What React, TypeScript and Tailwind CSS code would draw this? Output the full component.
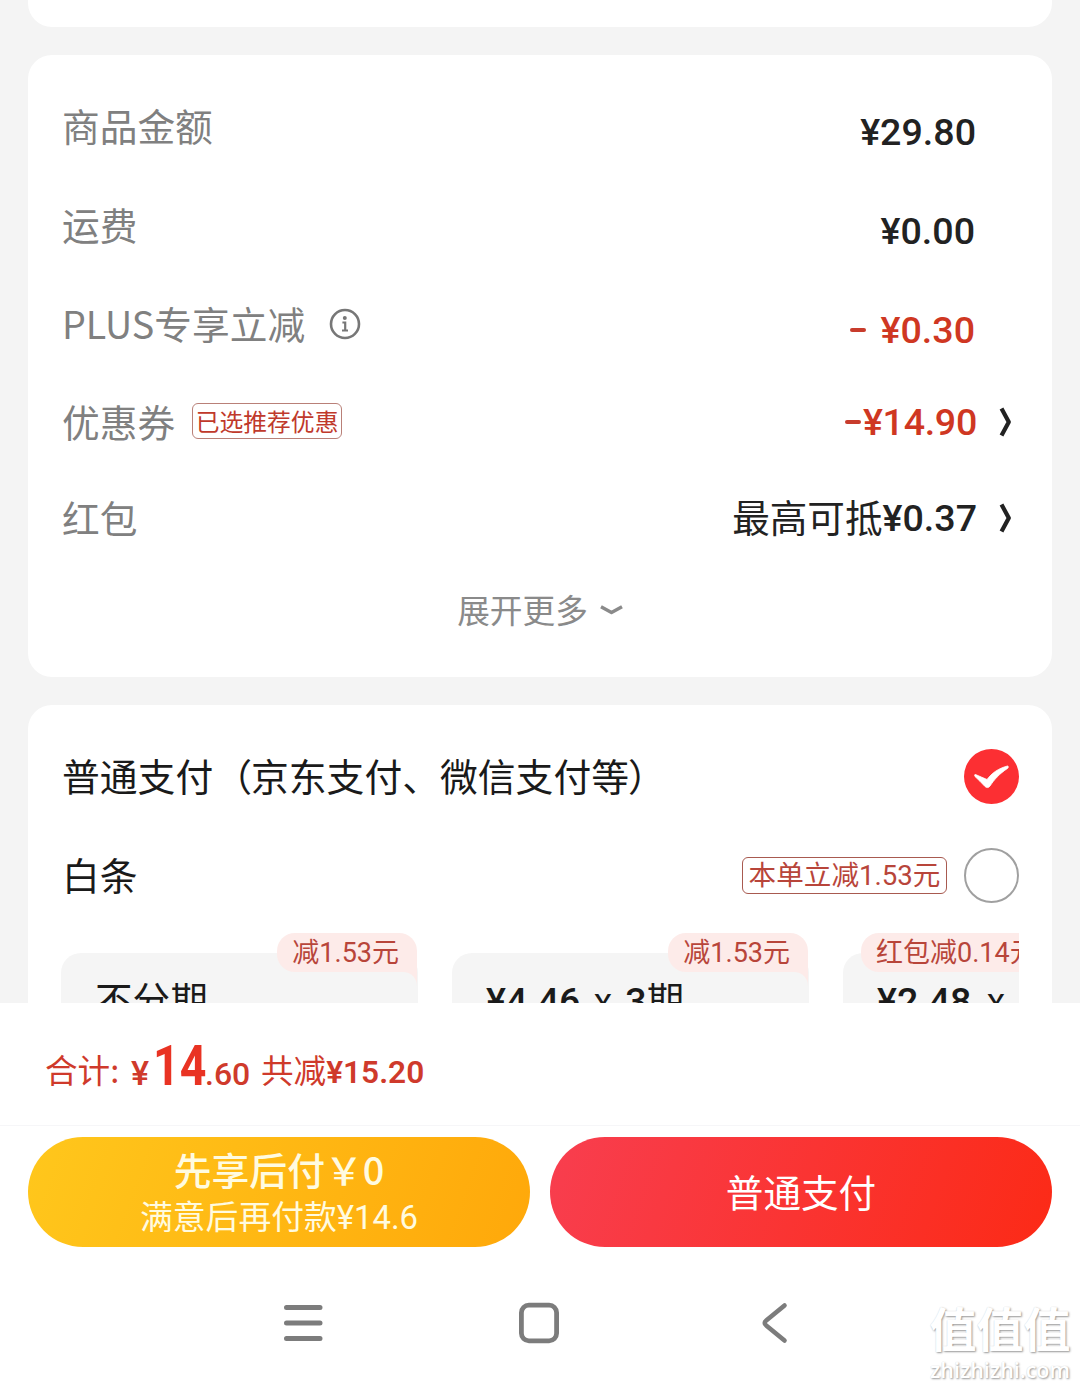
import { ReactNode } from "react";

type TPriceRow = {
  label: string;
  height: string;
  extra?: ReactNode;
  children: ReactNode;
};

type TPlan = {
  tag: string;
  tagClass: string;
  title: ReactNode;
};

const NUM = "font-[Roboto,'Noto_Sans_CJK_SC',sans-serif] font-medium";
const MIXED = "font-[Roboto,'Noto_Sans_CJK_SC',sans-serif]";

function PriceRow({ label, height, extra, children }: TPriceRow) {
  return (
    <div className={`flex items-center justify-between ${height}`}>
      <div className="flex items-center text-[37.7px] text-[#808080]">
        <span className="pb-1">{label}</span>
        {extra}
      </div>
      <div className="flex items-center text-[37.6px] text-[#222]">{children}</div>
    </div>
  );
}

function InfoIcon() {
  return (
    <svg className="mb-px ml-6 h-8 w-8" viewBox="0 0 32 32" fill="none" stroke="#777">
      <circle cx="16" cy="16" r="14" strokeWidth="2.6" />
      <circle cx="15.8" cy="10" r="2" fill="#777" stroke="none" />
      <path d="M13.4 14.5h2.800v7.500M13 22.500h6" strokeWidth="2.2" />
    </svg>
  );
}

function ArrowRight() {
  return (
    <svg className="mr-px mb-px ml-[22px] h-[30px] w-[14px]" viewBox="0 0 14 30" fill="none" stroke="#222" strokeWidth="4.2">
      <path d="M2.500 1.500L9.800 15L2.500 28.500" strokeLinejoin="round" />
    </svg>
  );
}

function PlanCard({ tag, tagClass, title }: TPlan) {
  return (
    <div className="relative h-[140px] w-[357px] shrink-0 rounded-[20px] bg-[#f5f5f5] pt-[18px] pl-[34px]">
      <div className={`absolute -top-5 flex h-[39px] items-center rounded-t-[18px] rounded-bl-[18px] bg-[#fdebe9] pr-[18px] pl-[15px] text-[27px] whitespace-nowrap text-[#b8453a] ${MIXED} ${tagClass}`}>
        <span className="relative top-px">{tag}</span>
        {/* little tail that wraps the card corner */}
        <span className="absolute top-full right-0 h-[14px] w-[14px] bg-[#fdebe9]">
          <span className="block h-full w-full rounded-tr-[14px] bg-[#f5f5f5]"></span>
        </span>
      </div>
      <div className="flex items-baseline text-[37.6px] leading-[54px] whitespace-nowrap text-[#1a1a1a]">{title}</div>
    </div>
  );
}

const plans: TPlan[] = [
  { tag: "减1.53元", tagClass: "right-px", title: "不分期" },
  {
    tag: "减1.53元",
    tagClass: "right-px",
    title: (
      <>
        <span className={NUM}>¥4.46</span>
        <span className="mx-[13px]">x</span>
        <span className={NUM}>3</span>期
      </>
    ),
  },
  {
    tag: "红包减0.14元",
    tagClass: "left-[18px]",
    title: (
      <>
        <span className={NUM}>¥2.48</span>
        <span className="mx-[15px]">x</span>
        <span className={`ml-2 ${NUM}`}>6</span>期
      </>
    ),
  },
];

function App() {
  return (
    <div className="relative flex h-[1388px] w-[1080px] flex-col overflow-hidden bg-[#f4f4f4] font-['Noto_Sans_CJK_SC',sans-serif] leading-none">
      <div className="mx-7 h-[27px] shrink-0 rounded-b-[24px] bg-white"></div>

      <section className="mx-7 mt-7 h-[622px] shrink-0 rounded-[24px] bg-white pt-[22px] pr-[38px] pl-[34px]">
        <PriceRow label="商品金额" height="h-[99px]">
          <span className={`mt-3 mr-[38px] ${NUM}`}>¥29.80</span>
        </PriceRow>
        <PriceRow label="运费" height="h-[99px]">
          <span className={`mt-3 mr-[39px] ${NUM}`}>¥0.00</span>
        </PriceRow>
        <PriceRow label="PLUS专享立减" height="h-[99px]" extra={<InfoIcon />}>
          <span className={`mt-3 mr-[39px] flex text-[#cf3722] ${NUM}`}>
            <i className="mt-[16px] mr-[15px] h-1 w-4 rounded-sm bg-[#c83c2c]"></i>¥0.30
          </span>
        </PriceRow>
        <PriceRow
          label="优惠券"
          height="h-[97px]"
          extra={
            <span className="mb-[2px] ml-[17px] flex h-9 w-[150px] items-center justify-center rounded-md border border-[#b98078] pb-[2px] text-[23.8px] text-[#c0392b]">
              已选推荐优惠
            </span>
          }
        >
          <span className={`flex pt-px text-[#cf3722] ${NUM}`}>
            <i className="mt-[16px] mr-[2px] h-1 w-4 rounded-sm bg-[#c83c2c]"></i>
            <span className="tracking-[-0.3px]">¥14.90</span>
          </span>
          <ArrowRight />
        </PriceRow>
        <PriceRow label="红包" height="h-[95px]">
          <span className="pb-[5px]">最高可抵</span>
          <span className={NUM}>¥0.37</span>
          <ArrowRight />
        </PriceRow>
        <div className="flex h-[90px] items-center justify-center pl-1 text-[32.7px] text-[#8a8a8a]">
          <span className="pb-[3px]">展开更多</span>
          <svg className="mb-[2px] ml-3 h-[10px] w-[23px]" viewBox="0 0 23 10" fill="none" stroke="#8a8a8a" strokeWidth="3.4">
            <path d="M1 1.8L11.5 7.6L22 1.8" strokeLinejoin="round" />
          </svg>
        </div>
      </section>

      <section className="mx-7 mt-7 h-[298px] shrink-0 overflow-hidden rounded-t-[24px] bg-white pt-[22px] pr-[33px] pl-[34px]">
        <div className="flex h-[99px] items-center justify-between text-[37.8px] text-[#1a1a1a]">
          <span className="flex pb-[3px]">
            普通支付
            <span className="mr-[-1px] ml-px">（</span>
            京东支付、微信支付等
            <span className="-ml-px">）</span>
          </span>
          <svg className="h-[55px] w-[55px]" viewBox="0 0 55 55">
            <circle cx="27.5" cy="27.5" r="27.5" fill="#fc2f33" />
            <path d="M11.5 25.5C15 27 19.5 29 23 30.5C28 24 34 19.5 43.5 17C44.5 17 44.5 18.500 43.800 19.200C35 25 30 31 26 37C24.500 39 22.500 39 21 37.500C18 34 14 30.500 11 27.500C10.300 26.300 10.500 25.300 11.500 25.500Z" fill="#fff" stroke="#fff" strokeWidth="0.8" strokeLinejoin="round" />
          </svg>
        </div>
        <div className="flex h-[99px] items-center justify-between text-[37.8px] text-[#1a1a1a]">
          <span className="pb-[3px]">白条</span>
          <div className="flex items-center">
            <span className={`mr-[17px] flex h-[37px] w-[205px] items-center justify-center rounded-md border border-[#a85a50] pt-px text-[27.6px] text-[#b8453a] ${MIXED}`}>
              本单立减1.53元
            </span>
            <span className="h-[55px] w-[55px] rounded-full border-2 border-[#a0a0a0]"></span>
          </div>
        </div>
        <div className="-ml-px flex h-[78px] gap-[34px] overflow-hidden pt-[28px]">
          {plans.map((plan, i) => (
            <PlanCard key={i} {...plan} />
          ))}
        </div>
      </section>

      <footer className="h-[385px] shrink-0 bg-white">
        <div className="flex h-[123px] items-baseline border-b border-[#f6f6f8] pt-[35px] pl-[45px] text-[#cf3a2b]">
          <span className="relative -top-[2px] w-[86px] text-[32.6px]">合计:</span>
          <span className={`w-[22px] text-[34px] ${NUM}`}>¥</span>
          <span className="w-[52px] font-[Roboto,sans-serif] text-[56px] font-bold text-[#e93323]">
            <span className="inline-block origin-left scale-x-[0.83]">14</span>
          </span>
          <span className={`w-[56px] text-[32px] ${NUM}`}>.60</span>
          <span className="relative -top-[2px] text-[32.6px]">共减</span>
          <span className="relative -top-[2px] font-[Roboto,sans-serif] text-[31.6px] font-semibold">¥15.20</span>
        </div>
        <div className="flex gap-5 px-7 pt-[11px] text-white">
          <button className="flex h-[110px] w-[502px] flex-col items-center rounded-full bg-linear-[110deg] from-[#ffc71c] to-[#ffa80a] pt-[13px] whitespace-nowrap text-[#fffbe0]">
            <span className="text-[37.8px] leading-[38px] font-medium">先享后付￥0</span>
            <span className={`mt-[13px] text-[32.8px] leading-[34px] ${MIXED}`}>满意后再付款¥14.6</span>
          </button>
          <button className="flex h-[110px] w-[502px] items-center justify-center rounded-full bg-linear-[110deg] from-[#f83e4f] to-[#fc2a16] pb-[3px] text-[37.6px]">
            普通支付
          </button>
        </div>
        <nav className="flex items-center pt-[54px] pl-[283px]">
          <svg className="h-[44px] w-10" viewBox="0 0 40 44" stroke="#7c7c7c" strokeWidth="5" strokeLinecap="round">
            <path d="M3.500 6.500H37M3.500 22H37M3.500 37.500H37" />
          </svg>
          <svg className="ml-[194px] h-[44px] w-[44px]" viewBox="0 0 44 44" fill="none" stroke="#7c7c7c" strokeWidth="4.800">
            <rect x="4.400" y="4.200" width="35.200" height="35.600" rx="7.500" />
          </svg>
          <svg className="ml-[198px] h-[44px] w-[34px]" viewBox="0 0 34 44" fill="none" stroke="#7c7c7c" strokeWidth="4.600" strokeLinecap="round">
            <path d="M25.500 4.500L7.500 19.200Q4 22 7.500 24.800L25.500 39.500" />
          </svg>
        </nav>
      </footer>

      <div className="absolute top-[1303px] left-[929px] flex w-[142px] flex-col items-center whitespace-nowrap text-white [text-shadow:1px_1px_2px_#999,0_0_1px_#ddd]">
        <span className="text-[47px] leading-[48px] font-bold">值值值</span>
        <span className="mt-[7px] font-['Open_Sans',sans-serif] text-[21.5px] leading-6 font-semibold">zhizhizhi.com</span>
      </div>
    </div>
  );
}

export default App;
